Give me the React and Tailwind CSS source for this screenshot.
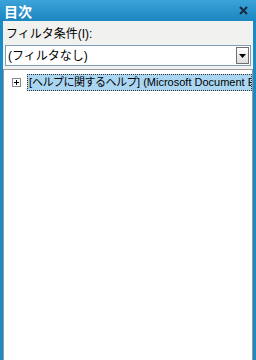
import React from 'react';

const font = { fontFamily: '"Liberation Sans", "Noto Sans CJK JP", sans-serif' };

function TitleBar() {
  return (
    <div className="flex h-[21px] items-center justify-between bg-gradient-to-b from-[#3aa3d8] to-[#1b86c0] pl-[4px] pr-[8px]">
      <span className="text-[14px] font-bold leading-none text-white" style={{ fontFamily: '"Noto Sans CJK JP", sans-serif' }}>目次</span>
      <svg width="9" height="9" viewBox="0 0 9 9">
        <path d="M1 1 L8 8 M8 1 L1 8" stroke="#1a2a40" strokeWidth="2" />
      </svg>
    </div>
  );
}

function Filter() {
  return (
    <div className="flex flex-col bg-[#f1f1ef] px-[2px] pt-[5px] pb-[3px]">
      <span className="pl-[1px] text-[12px] leading-[16px] text-black">フィルタ条件(I):</span>
      <div className="mt-[3px] flex h-[21px] items-center justify-between border border-[#7f9db9] bg-white pl-[2px] pr-[1px]">
        <span className="text-[12px] leading-none text-black">(フィルタなし)</span>
        <div className="flex h-[17px] w-[13px] items-center justify-center border border-[#707070] bg-gradient-to-b from-white to-[#dcdcdc]">
          <svg width="7" height="4" viewBox="0 0 7 4">
            <path d="M0 0 L7 0 L3.5 4 Z" fill="#000" />
          </svg>
        </div>
      </div>
    </div>
  );
}

function TreeItem() {
  return (
    <div className="flex items-center pl-[8px] pt-[4px]">
      <div className="flex h-[9px] w-[9px] shrink-0 items-center justify-center border border-[#8a8a8a] bg-white">
        <svg width="5" height="5" viewBox="0 0 5 5">
          <path d="M0 2.5 H5 M2.5 0 V5" stroke="#000" strokeWidth="1" />
        </svg>
      </div>
      <div className="ml-[6px] min-w-0 flex-1 overflow-hidden whitespace-nowrap border border-dotted border-[#333] bg-[#aad6f2] pl-[1px] text-[11px] leading-[15px] text-black">
        [<span className="tracking-[-0.5px]">ヘルプに関するヘルプ</span>] (Microsoft Document Explorer)
      </div>
    </div>
  );
}

export default function App() {
  return (
    <div className="flex h-[360px] w-[256px] flex-col overflow-hidden bg-[#1b8bc6] px-[3px]" style={font}>
      <div className="-mx-[3px]">
        <TitleBar />
      </div>
      <Filter />
      <div className="flex-1 border-x border-t border-[#9a9a9a] bg-white">
        <TreeItem />
      </div>
    </div>
  );
}
